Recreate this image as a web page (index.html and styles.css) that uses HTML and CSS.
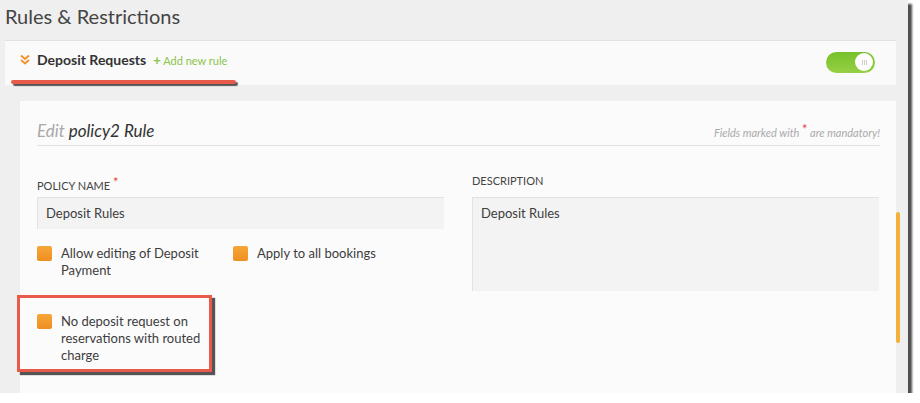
FILE: index.html
```
<!DOCTYPE html>
<html lang="en">
<head>
    <meta charset="UTF-8">
    <title>Rules &amp; Restrictions</title>
    <link rel="stylesheet" href="styles.css">
</head>
<body>
    <div class="shot">
        <div class="main">
            <h1 class="page_title">Rules &amp; Restrictions</h1>

            <div class="group_head">
                <div class="group_left">
                    <svg class="chevron" width="10" height="11" viewBox="0 0 10 11">
                        <path d="M1 1.5 L5 5 L9 1.5" fill="none" stroke="#f0932b" stroke-width="2"/>
                        <path d="M1 6 L5 9.5 L9 6" fill="none" stroke="#f0932b" stroke-width="2"/>
                    </svg>
                    <span class="group_name">Deposit Requests</span>
                    <a class="add_rule"><span class="plus">+</span> Add new rule</a>
                    <div class="mark_line"></div>
                </div>
                <div class="toggle">
                    <div class="knob"><span></span><span></span><span></span></div>
                </div>
            </div>

            <div class="edit_wrap">
                <div class="edit_card">
                    <div class="edit_head">
                        <div class="edit_title"><span class="muted">Edit</span> policy2 Rule</div>
                        <div class="mandatory">Fields marked with <span class="star">*</span> are mandatory!</div>
                    </div>

                    <div class="form_cols">
                        <div class="col">
                            <label class="field_label">POLICY NAME <span class="star">*</span></label>
                            <div class="input">Deposit Rules</div>

                            <div class="checks">
                                <div class="check">
                                    <span class="box"></span>
                                    <span class="check_text">Allow editing of Deposit Payment</span>
                                </div>
                                <div class="check">
                                    <span class="box"></span>
                                    <span class="check_text">Apply to all bookings</span>
                                </div>
                            </div>

                            <div class="checks checks_last">
                                <div class="check">
                                    <span class="box"></span>
                                    <span class="check_text">No deposit request on reservations with routed charge</span>
                                </div>
                                <div class="mark_box"></div>
                            </div>
                        </div>
                        <div class="col">
                            <label class="field_label">DESCRIPTION</label>
                            <div class="input textarea">Deposit Rules</div>
                        </div>
                    </div>
                </div>
            </div>
        </div>
        <div class="track">
            <div class="thumb"></div>
        </div>
    </div>
</body>
</html>
```

FILE: styles.css
```
body {
    margin: 0;
    background: #fff;
    font-family: Lato, "Open Sans", sans-serif;
    color: #3d3d3d;
}
.shot {
    width: 908px;
    height: 393px;
    background: #efefef;
    display: flex;
    overflow: hidden;
    box-shadow: 4px 4px 2px #4e4e4e;
}
.main {
    width: 896px;
}
.page_title {
    margin: 0;
    height: 40px;
    padding-left: 5px;
    font-size: 20px;
    font-weight: normal;
    line-height: 32px;
    color: #444;
}
.group_head {
    margin-left: 5px;
    height: 45px;
    background: #fafafa;
    border-top: 1px solid #e2e2e2;
    box-sizing: border-box;
    display: flex;
    align-items: center;
    justify-content: space-between;
    padding: 0 21px 0 15px;
}
.group_left {
    position: relative;
    display: flex;
    align-items: center;
    padding-bottom: 8px;
}
.chevron {
    margin-right: 7px;
}
.group_name {
    font-size: 14px;
    font-weight: bold;
    color: #333;
}
.add_rule {
    margin-left: 7px;
    font-size: 11px;
    color: #8bc34a;
    margin-top: 2px;
}
.plus {
    font-weight: bold;
    font-size: 13px;
}
.mark_line {
    position: absolute;
    left: -9px;
    top: 30px;
    width: 225px;
    height: 4px;
    border-radius: 2px;
    background: #e95a4b;
    box-shadow: 2px 2px 1px #555;
}
.toggle {
    width: 49px;
    height: 21px;
    border-radius: 11px;
    background: linear-gradient(#76c12a, #97d046);
    display: flex;
    justify-content: flex-end;
    align-items: center;
    padding-right: 2px;
    box-sizing: border-box;
    margin-bottom: 2px;
}
.knob {
    width: 18px;
    height: 18px;
    border-radius: 50%;
    background: #fff;
    display: flex;
    justify-content: center;
    align-items: center;
    gap: 1px;
}
.knob span {
    width: 1px;
    height: 5px;
    background: #ccc;
}
.edit_wrap {
    padding: 16px 0 0 20px;
}
.edit_card {
    background: #fbfbfb;
    height: 300px;
    padding: 0 16px 0 17px;
}
.edit_head {
    display: flex;
    justify-content: space-between;
    align-items: baseline;
    padding-top: 19px;
    padding-bottom: 4px;
    border-bottom: 1px solid #e4e4e4;
}
.edit_title {
    font-size: 17px;
    font-style: italic;
    color: #333;
}
.muted {
    color: #a8a8a8;
}
.mandatory {
    font-size: 11px;
    font-style: italic;
    color: #aaa;
}
.star {
    color: #e0463c;
    font-style: normal;
    font-size: 13px;
    vertical-align: 3px;
}
.form_cols {
    display: grid;
    grid-template-columns: 407px 407px;
    column-gap: 28px;
    padding-top: 28px;
}
.field_label {
    display: block;
    font-size: 11px;
    color: #444;
    height: 23px;
}
.input {
    height: 32px;
    box-sizing: border-box;
    background: #f3f3f3;
    border-top: 1px solid #e2e2e2;
    border-left: 1px solid #e2e2e2;
    padding: 7px 8px;
    font-size: 13px;
    color: #3d3d3d;
}
.textarea {
    height: 94px;
}
.checks {
    display: flex;
    padding-top: 16px;
    position: relative;
}
.checks_last {
    padding-top: 34px;
}
.check {
    display: flex;
    width: 196px;
    align-items: flex-start;
}
.box {
    flex: none;
    width: 15px;
    height: 15px;
    border-radius: 2px;
    background: linear-gradient(#f6a63a, #ef8f1f);
    margin-right: 9px;
    margin-top: 1px;
}
.check_text {
    font-size: 13px;
    line-height: 17px;
    width: 148px;
}
.mark_box {
    position: absolute;
    left: -20px;
    top: 16px;
    width: 189px;
    height: 71px;
    border: 3px solid #e95a4b;
    box-shadow: 3px 3px 1px #555;
}
.track {
    width: 12px;
    padding-top: 212px;
}
.thumb {
    width: 4px;
    height: 131px;
    border-radius: 2px;
    background: #f4b03c;
}
```
